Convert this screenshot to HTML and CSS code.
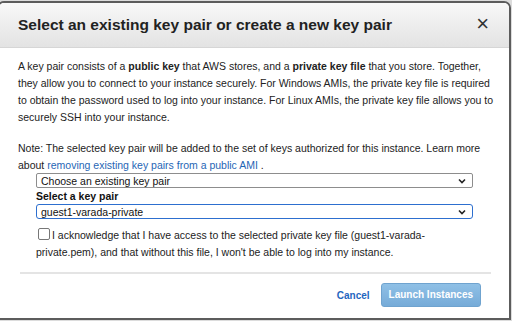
FILE: index.html
```html
<!DOCTYPE html>
<html>
<head>
<meta charset="utf-8">
<link rel="stylesheet" href="styles.css">
</head>
<body>
<div class="dialog">
  <div class="header">
    <h1 class="title">Select an existing key pair or create a new key pair</h1>
    <span class="close">×</span>
  </div>
  <div class="content">
    <p class="para">A key pair consists of a <b>public key</b> that AWS stores, and a <b>private key file</b> that you store. Together, they allow you to connect to your instance securely. For Windows AMIs, the private key file is required to obtain the password used to log into your instance. For Linux AMIs, the private key file allows you to securely SSH into your instance.</p>
    <p class="para note">Note: The selected key pair will be added to the set of keys authorized for this instance. Learn more about <a class="link">removing existing key pairs from a public AMI</a> .</p>
    <div class="form">
      <div class="select"><span>Choose an existing key pair</span><svg class="chev" width="8" height="6" viewBox="0 0 8 6"><path d="M1 1.5 L4 4.5 L7 1.5" fill="none" stroke="#222" stroke-width="1.6"/></svg></div>
      <div class="label">Select a key pair</div>
      <div class="select focus"><span>guest1-varada-private</span><svg class="chev" width="8" height="6" viewBox="0 0 8 6"><path d="M1 1.5 L4 4.5 L7 1.5" fill="none" stroke="#222" stroke-width="1.6"/></svg></div>
      <p class="ack"><span class="box"></span>I acknowledge that I have access to the selected private key file (guest1-varada-private.pem), and that without this file, I won't be able to log into my instance.</p>
    </div>
  </div>
  <div class="footer">
    <a class="cancel">Cancel</a>
    <span class="launch">Launch Instances</span>
  </div>
</div>
</body>
</html>
```
FILE: styles.css
```css
html, body {
  margin: 0;
  padding: 0;
}
body {
  width: 512px;
  height: 321px;
  overflow: hidden;
  background: #dcdcdc;
  font-family: "Liberation Sans", Arial, sans-serif;
  color: #222;
}
.dialog {
  box-sizing: border-box;
  margin: 1px 1px 0 -3px;
  width: 514px;
  height: 319px;
  background: #fff;
  border: 2px solid #5c5c5c;
  border-radius: 7px 7px 0 0;
  overflow: hidden;
  display: flex;
  flex-direction: column;
}
.header {
  height: 45px;
  flex: none;
  box-sizing: border-box;
  background: linear-gradient(#f8f8f8, #e3e3e3);
  border-bottom: 1px solid #d6d6d6;
  display: flex;
  align-items: center;
  justify-content: space-between;
  padding: 0 20px 0 19px;
}
.title {
  margin: 0;
  font-size: 15.5px;
  font-weight: bold;
  color: #222;
}
.close {
  font-size: 22px;
  color: #333;
  line-height: 1;
  margin-top: -2px;
}
.content {
  padding: 10px 15px 0 19px;
  flex: 1;
}
.para {
  margin: 0;
  font-size: 10.5px;
  line-height: 17px;
  color: #222;
}
.note {
  margin-top: 14px;
}
.link {
  color: #1f66b5;
}
.form {
  margin: -1px 0 0 18px;
  width: 437px;
}
.select {
  box-sizing: border-box;
  height: 15px;
  border: 1px solid #8d8d8d;
  border-radius: 2px;
  display: flex;
  align-items: center;
  justify-content: space-between;
  padding: 0 6px 0 4px;
  font-size: 10.5px;
  line-height: 12px;
  color: #111;
}
.select.focus {
  border: 1.5px solid #2d6fcf;
  border-radius: 3px;
}
.label {
  font-size: 10.5px;
  font-weight: bold;
  line-height: 16px;
  margin-top: 0;
  color: #111;
}
.ack {
  margin: 8px 0 0 0;
  font-size: 10.5px;
  line-height: 17px;
  color: #222;
}
.box {
  display: inline-block;
  width: 10px;
  height: 10px;
  border: 1px solid #777;
  border-radius: 2px;
  margin: 0 2px 0 2px;
  vertical-align: -1px;
}
.footer {
  flex: none;
  margin: 0 18px 0 21px;
  border-top: 2px solid #e4e4e4;
  height: 42px;
  display: flex;
  align-items: center;
  justify-content: flex-end;
  gap: 11px;
  padding-bottom: 2px;
}
.cancel {
  color: #1f66c0;
  font-weight: bold;
  font-size: 10px;
}
.launch {
  background: linear-gradient(#8fc0e6, #76abd8);
  border: 1px solid #6fa3cf;
  border-radius: 3px;
  color: #fff;
  font-weight: bold;
  font-size: 10px;
  padding: 0 7px;
  height: 22px;
  line-height: 22px;
  margin-right: 10px;
}
```
